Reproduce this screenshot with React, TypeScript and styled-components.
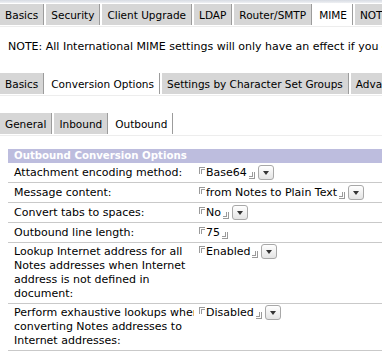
import styled, { createGlobalStyle } from 'styled-components';

const GlobalStyle = createGlobalStyle`
  html, body {
    margin: 0;
    padding: 0;
    background: #fff;
  }
  body {
    font-family: "DejaVu Sans", Verdana, sans-serif;
    font-size: 11px;
    color: #000;
    width: 382px;
    height: 351px;
    overflow: hidden;
  }
`;

const Page = styled.div`
  width: 382px;
  overflow: hidden;
`;

const TopEdge = styled.div`
  height: 3px;
  background: linear-gradient(#d7dbe3, #eef0f3);
`;

const TabBar = styled.div<{ $gap: number }>`
  display: flex;
  height: 21px;
  margin-top: ${(p) => p.$gap}px;
  padding-bottom: 1px;
  border-bottom: 1px solid #ededed;
  white-space: nowrap;
  overflow: hidden;
`;

const Tab = styled.div<{ $active?: boolean }>`
  flex: none;
  display: flex;
  align-items: center;
  padding: 0 5px;
  font-size: 10.5px;
  background: ${(p) => (p.$active ? '#fff' : '#d6d6d6')};
  border-right: 1px solid #9c9c9c;
  margin-right: 2px;
`;

const Note = styled.div`
  margin: 13px 0 0 8px;
  line-height: 14px;
  white-space: nowrap;
`;

const Section = styled.div`
  margin: 13px 0 0 8px;
`;

const SectionHeader = styled.div`
  height: 14px;
  line-height: 14px;
  padding-left: 6px;
  background: #bdbdde;
  color: #fff;
  font-size: 10.2px;
  font-weight: bold;
  white-space: nowrap;
`;

const Row = styled.div<{ $single: boolean }>`
  display: grid;
  grid-template-columns: 186px 1fr;
  padding: ${(p) => (p.$single ? '3px 0 2px' : '2px 0 2px')};
  line-height: 14px;
  border-bottom: 1px solid #c9c9c9;
`;

const Label = styled.div`
  padding-left: 6px;
  white-space: nowrap;
  overflow: hidden;
`;

const Value = styled.div`
  display: flex;
  align-items: flex-start;
  padding-left: 5px;
  white-space: nowrap;
`;

const OpenMark = styled.span`
  display: inline-block;
  width: 3px;
  height: 4px;
  margin-top: 1px;
  margin-right: 1px;
  border-top: 3px double #9a9a9a;
  border-left: 3px double #9a9a9a;
`;

const CloseMark = styled.span`
  display: inline-block;
  width: 3px;
  height: 4px;
  margin-top: 6px;
  margin-left: 2px;
  border-bottom: 3px double #9a9a9a;
  border-right: 3px double #9a9a9a;
`;

const DropButton = styled.span`
  display: inline-flex;
  align-items: center;
  justify-content: center;
  width: 14px;
  height: 13px;
  margin-left: 3px;
  margin-top: -1px;
  border: 1px solid #a8a8a8;
  border-radius: 3px;
  background: linear-gradient(#ffffff, #e4e4e4);
  &::after {
    content: '';
    border-left: 3px solid transparent;
    border-right: 3px solid transparent;
    border-top: 4px solid #333;
  }
`;

type Field = {
  label: string[];
  value: string;
  dropdown: boolean;
};

const fields: Field[] = [
  { label: ['Attachment encoding method:'], value: 'Base64', dropdown: true },
  { label: ['Message content:'], value: 'from Notes to Plain Text', dropdown: true },
  { label: ['Convert tabs to spaces:'], value: 'No', dropdown: true },
  { label: ['Outbound line length:'], value: '75', dropdown: false },
  {
    label: [
      'Lookup Internet address for all',
      'Notes addresses when Internet',
      'address is not defined in',
      'document:',
    ],
    value: 'Enabled',
    dropdown: true,
  },
  {
    label: [
      'Perform exhaustive lookups when',
      'converting Notes addresses to',
      'Internet addresses:',
    ],
    value: 'Disabled',
    dropdown: true,
  },
];

const topTabs = ['Basics', 'Security', 'Client Upgrade', 'LDAP', 'Router/SMTP', 'MIME', 'NOTES.INI'];
const mimeTabs = ['Basics', 'Conversion Options', 'Settings by Character Set Groups', 'Advanced'];
const conversionTabs = ['General', 'Inbound', 'Outbound'];

const TabRow = ({ tabs, active, gap }: { tabs: string[]; active: string; gap: number }) => (
  <TabBar $gap={gap}>
    {tabs.map((t) => (
      <Tab key={t} $active={t === active}>
        {t}
      </Tab>
    ))}
  </TabBar>
);

const App = () => {
  return (
    <Page>
      <GlobalStyle />
      <TopEdge />
      <TabRow tabs={topTabs} active="MIME" gap={1} />
      <Note>
        NOTE: All International MIME settings will only have an effect if you enable MIME
      </Note>
      <TabRow tabs={mimeTabs} active="Conversion Options" gap={19} />
      <TabRow tabs={conversionTabs} active="Outbound" gap={17} />
      <Section>
        <SectionHeader>Outbound Conversion Options</SectionHeader>
        {fields.map((f) => (
          <Row key={f.value} $single={f.label.length === 1}>
            <Label>
              {f.label.map((line, i) => (
                <div key={i}>{line}</div>
              ))}
            </Label>
            <Value>
              <OpenMark />
              {f.value}
              <CloseMark />
              {f.dropdown && <DropButton />}
            </Value>
          </Row>
        ))}
      </Section>
    </Page>
  );
};

export default App;
